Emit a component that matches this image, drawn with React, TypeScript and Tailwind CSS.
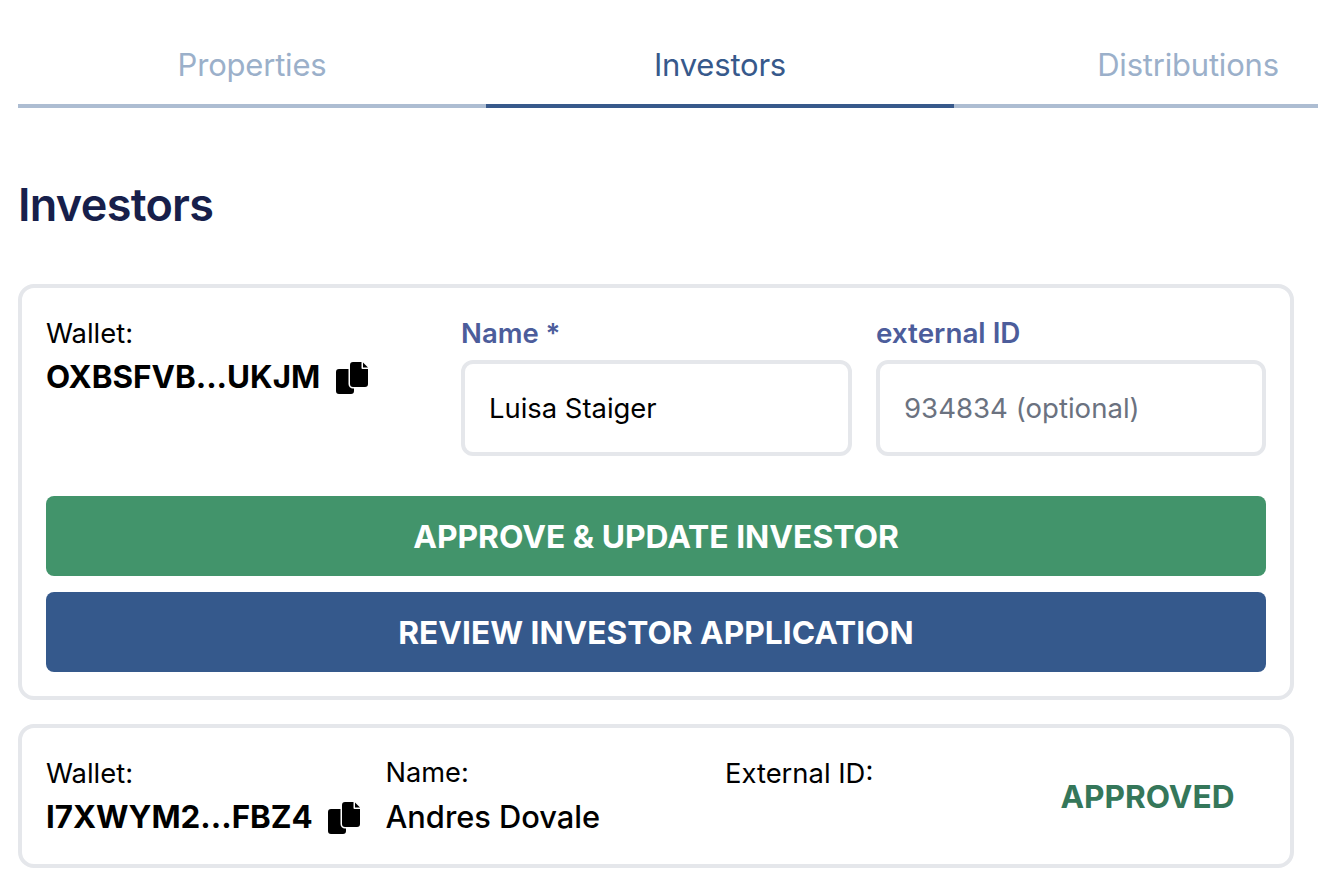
import React from "react";

const tabs = [
  { label: "Properties", active: false },
  { label: "Investors", active: true },
  { label: "Distributions", active: false },
];

// two sheets, the front one with a folded corner
const CopyIcon = () => (
  <svg viewBox="0 0 32 33" className="h-[33px] w-8 shrink-0 fill-black">
    <path d="M3 8H12.5V23a4.5 4.5 0 0 0 4.5 4.5H18V30a3 3 0 0 1-3 3H3a3 3 0 0 1-3-3V11a3 3 0 0 1 3-3z" />
    <path d="M17 1H25.5V7a1 1 0 0 0 1 1H32V23a3 3 0 0 1-3 3H17a3 3 0 0 1-3-3V4a3 3 0 0 1 3-3z" />
    <path d="M27 1.5L32 6.5H27z" />
  </svg>
);

export default function App() {
  return (
    <div className="h-[892px] w-[1318px] overflow-hidden bg-white font-['Inter',sans-serif] text-black">
      <div className="pl-[18px]">
        {/* Tabs */}
        <div className="flex w-[1404px] pt-[22px]">
          {tabs.map((tab) => (
            <div
              key={tab.label}
              className={`h-[86px] w-[468px] border-b-4 pt-[20px] text-center text-[31px] leading-[45px] tracking-[-0.2px] ${
                tab.active ? "border-[#37598b] text-[#37598b]" : "border-[#adbdd2] text-[#9bb0ca]"
              }`}
            >
              {tab.label}
            </div>
          ))}
        </div>

        <h1 className="mt-[67px] text-[45px] leading-[60px] font-semibold tracking-[-0.7px] text-[#171f4b]">
          Investors
        </h1>

        {/* Pending investor */}
        <div className="mt-[49px] w-[1276px] rounded-2xl border-4 border-[#e5e7eb] p-6">
          <div className="flex">
            <div className="w-[415px] pt-[3px]">
              <div className="text-[27.4px] leading-9">Wallet:</div>
              <div className="mt-2 flex items-center gap-4 text-[31.4px] leading-9 font-bold">
                <span>OXBSFVB...UKJM</span>
                <CopyIcon />
              </div>
            </div>
            <div className="w-[391px]">
              <label className="mt-[3px] block text-[27.5px] leading-9 font-semibold text-[#4c5d9b]">Name *</label>
              <div className="mt-[9px] flex h-24 items-center rounded-xl border-4 border-[#e5e7eb] px-6 pt-px text-[27.4px]">
                Luisa Staiger
              </div>
            </div>
            <div className="ml-6 w-[390px]">
              <label className="mt-[3px] block text-[27.8px] leading-9 font-semibold text-[#4c5d9b]">external ID</label>
              <div className="mt-[9px] flex h-24 items-center rounded-xl border-4 border-[#e5e7eb] px-6 pt-px text-[27.6px] text-[#6b7280]">
                934834 (optional)
              </div>
            </div>
          </div>

          <button className="mt-10 block h-20 w-full rounded-lg bg-[#42946b] pt-px text-[31.8px] font-bold text-white">
            APPROVE &amp; UPDATE INVESTOR
          </button>
          <button className="mt-4 block h-20 w-full rounded-lg bg-[#35598c] pt-px text-[31.7px] font-bold text-white">
            REVIEW INVESTOR APPLICATION
          </button>
        </div>

        {/* Approved investor */}
        <div className="mt-6 flex h-[144px] w-[1276px] items-center rounded-2xl border-4 border-[#e5e7eb] px-6">
          <div className="w-[340px] -translate-y-px">
            <div className="text-[27.4px] leading-9">Wallet:</div>
            <div className="mt-2 flex items-center gap-[15.5px] text-[31.3px] leading-9 font-bold">
              <span>I7XWYM2...FBZ4</span>
              <CopyIcon />
            </div>
          </div>
          <div className="-ml-[0.5px] w-[339.5px] -translate-y-px">
            <div className="text-[27.2px] leading-9">Name:</div>
            <div className="mt-2 text-[30.8px] leading-9 font-medium">Andres Dovale</div>
          </div>
          <div className="h-20 w-[335px] -translate-y-px">
            <div className="text-[27.4px] leading-9">External ID:</div>
          </div>
          <div className="w-[175px] translate-y-px text-center text-[31.6px] font-bold text-[#35775a]">APPROVED</div>
        </div>
      </div>
    </div>
  );
}
